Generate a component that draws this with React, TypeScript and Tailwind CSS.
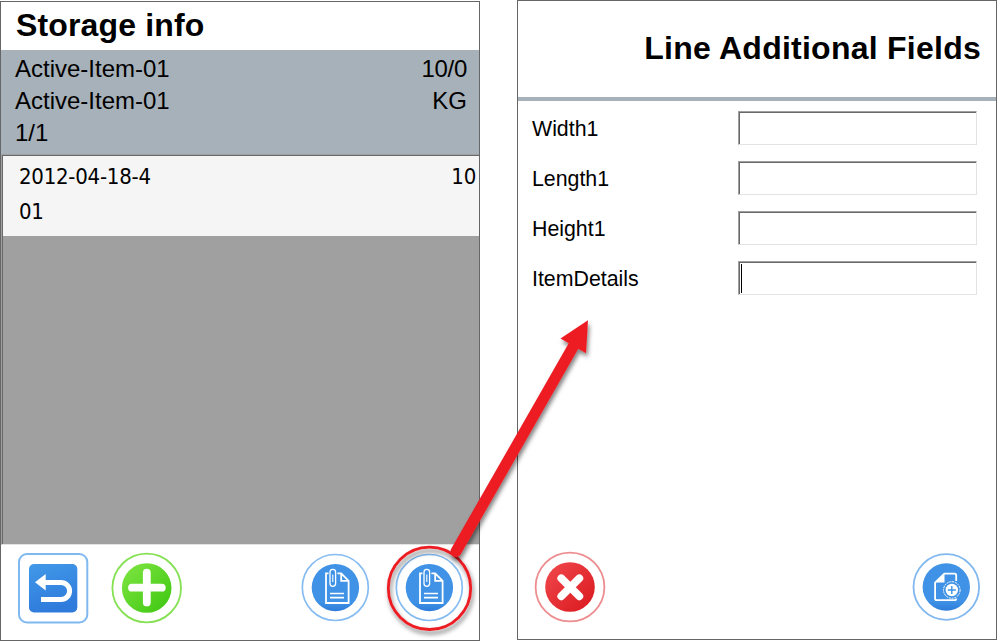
import React from "react";

const arial = "font-['Liberation_Sans',Arial,sans-serif]";

function BackIcon() {
  return (
    <svg width="72" height="72" viewBox="18 553 72 72" className="block">
      <defs>
        <linearGradient id="back" x1="0" y1="0" x2="0.3" y2="1">
          <stop offset="0" stopColor="#4199e8" />
          <stop offset="1" stopColor="#2f7bdc" />
        </linearGradient>
      </defs>
      <rect x="19" y="554" width="68.3" height="68.5" rx="8" fill="#fff" stroke="#80b9f0" strokeWidth="2" />
      <rect x="29" y="564" width="48.3" height="48.5" rx="5" fill="url(#back)" />
      <path d="M43.5 582.4H61a8.6 8.6 0 0 1 0 17.2H41" fill="none" stroke="#fff" strokeWidth="5" />
      <path d="M35 582.2L45.7 574v16.4z" fill="#fff" />
    </svg>
  );
}

function AddIcon() {
  return (
    <svg width="72" height="72" viewBox="111 552 72 72" className="block">
      <defs>
        <linearGradient id="add" x1="0" y1="0" x2="1" y2="1">
          <stop offset="0.1" stopColor="#7ae33e" />
          <stop offset="0.9" stopColor="#43c915" />
        </linearGradient>
      </defs>
      <circle cx="146.7" cy="588" r="34.3" fill="#fff" stroke="#86e053" strokeWidth="1.8" />
      <circle cx="146.7" cy="588" r="24.8" fill="url(#add)" />
      <path d="M146.8 572.6v29.8M132 587.7h29.8" stroke="#fff" strokeWidth="7.8" strokeLinecap="round" />
    </svg>
  );
}

function AttachmentIcon() {
  return (
    <svg width="70" height="70" viewBox="300 553 70 70" className="block">
      <defs>
        <linearGradient id="attach" x1="0" y1="0" x2="0" y2="1">
          <stop offset="0.8" stopColor="#3f92e5" />
          <stop offset="1" stopColor="#2f7cdb" />
        </linearGradient>
      </defs>
      <circle cx="335.3" cy="587.5" r="33" fill="#fff" stroke="#86bcf1" strokeWidth="1.7" />
      <circle cx="335.4" cy="587.6" r="23.7" fill="url(#attach)" />
      <g fill="none" stroke="#fff">
        <path d="M328.5 573.4H326v29.6h22.6v-22.2l-7.4-7.4h-3.8" strokeWidth="1.8" />
        <path d="M341.2 573.6v7.2h7.2" strokeWidth="1.8" />
        <path d="M330 593.5h14M330 597.7h14" strokeWidth="1.7" />
        <path d="M330 572.4v11.2a2.8 2.8 0 0 0 5.6 0v-11.4a2.8 2.8 0 0 0-5.6 0z" strokeWidth="1.3" />
        <path d="M332.8 574.5v7.5" strokeWidth="1.1" />
      </g>
    </svg>
  );
}

function CancelIcon() {
  return (
    <svg width="72" height="72" viewBox="534 551 72 72" className="block">
      <defs>
        <linearGradient id="cancel" x1="0" y1="0" x2="1" y2="1">
          <stop offset="0.1" stopColor="#ee4449" />
          <stop offset="0.9" stopColor="#dc1c22" />
        </linearGradient>
      </defs>
      <circle cx="570" cy="587" r="34.4" fill="#fff" stroke="#ed8d90" strokeWidth="1.8" />
      <circle cx="570" cy="587" r="24.8" fill="url(#cancel)" />
      <path d="M561.3 578.3l18 18M579.3 578.3l-18 18" stroke="#fff" strokeWidth="7.8" strokeLinecap="round" />
    </svg>
  );
}

function AddDocumentIcon() {
  return (
    <svg width="70" height="70" viewBox="911 552 70 70" className="block">
      <circle cx="946.3" cy="587" r="32.8" fill="#fff" stroke="#80b8ef" strokeWidth="1.8" />
      <circle cx="946.3" cy="587" r="23.7" fill="url(#attach)" />
      <path d="M956.2 581v-5.6q0-1.7-1.7-1.7h-10.2l-9.2 9v15.8q0 1.7 1.7 1.7h17.7q1.7 0 1.7-1.7" fill="none" stroke="#fff" strokeWidth="1.8" />
      <path d="M944.5 573.8v8.8h-9.3z" fill="#fff" />
      <circle cx="951.8" cy="590" r="8.3" fill="#3f92e5" stroke="#fff" strokeWidth="1" strokeDasharray="2 .8" />
      <circle cx="951.8" cy="590" r="6.2" fill="#fff" />
      <path d="M951.8 586v8M947.8 590h8" stroke="#3f92e5" strokeWidth="1.4" />
    </svg>
  );
}

function Callout() {
  return (
    <svg width="240" height="330" viewBox="380 311 240 330" className="pointer-events-none absolute left-[380px] top-[311px]">
      <defs>
        <filter id="shadow" x="-20%" y="-20%" width="150%" height="150%">
          <feDropShadow dx="1.5" dy="3.5" stdDeviation="2" floodColor="#000" floodOpacity="0.5" />
        </filter>
      </defs>
      <circle cx="429.5" cy="588.3" r="41.2" fill="none" stroke="#ed1c24" strokeWidth="2.8" filter="url(#shadow)" />
      <g filter="url(#shadow)" fill="#ed1c24">
        <path d="M456 551.5L573.5 346" stroke="#ed1c24" strokeWidth="11" strokeLinecap="round" />
        <path d="M588 320.3L586 353.3L560.5 338.5z" />
      </g>
    </svg>
  );
}

const fields = ["Width1", "Length1", "Height1", "ItemDetails"];

export default function App() {
  return (
    <main className={`relative flex h-[641px] w-[997px] justify-between overflow-hidden bg-white text-black ${arial}`}>
      <section className="mt-px flex h-[640px] w-[480px] flex-col border border-[#666]">
        <h1 className="h-12 pl-[15px] text-[32px] font-bold leading-[46px] tracking-[0.15px]">Storage info</h1>
        <div className="h-[104px] bg-[#a7b1b9] pl-[14px] pr-3 pt-[3px] text-2xl leading-8">
          <div className="flex justify-between"><span>Active-Item-01</span><span className="tracking-[-0.3px]">10/0</span></div>
          <div className="flex justify-between"><span>Active-Item-01</span><span>KG</span></div>
          <div>1/1</div>
        </div>
        <div className="flex h-[391px] flex-col border-b border-l border-t border-b-[#e3e3e3] border-l-[#a0a0a0] border-t-[#a0a0a0]">
          <div className="flex-1 border-l border-t border-[#696969] bg-[#a0a0a0]">
            <div className="flex h-20 justify-between bg-[#f5f5f5] pl-4 pr-[3px] pt-[3px] font-['DejaVu_Sans_Condensed','DejaVu_Sans',sans-serif] text-[22px] leading-[35px] tracking-[-0.25px] [font-stretch:condensed]">
              <div><div>2012-04-18-4</div><div>01</div></div>
              <div>10</div>
            </div>
          </div>
        </div>
        <div className="flex flex-1 items-start pl-[17px] pt-[7px]">
          <div className="mt-px"><BackIcon /></div>
          <div className="ml-[21px]"><AddIcon /></div>
          <div className="ml-[117px] mt-px"><AttachmentIcon /></div>
          <div className="ml-6 mt-px"><AttachmentIcon /></div>
        </div>
      </section>

      <section className="flex h-[640px] w-[480px] flex-col border border-[#666]">
        <h1 className="h-[100px] border-b-4 border-[#a7b1b9] pr-[15px] text-right text-[32px] font-bold leading-[94px] tracking-[0.25px]">Line Additional Fields</h1>
        <div className="flex flex-col gap-4 pl-[14px] pr-[19px] pt-[10px]">
          {fields.map((name) => (
            <label key={name} className="flex h-[34px] items-center justify-between text-[21.33px]">
              <span className="pt-[3px]">{name}</span>
              <span className="flex h-[34px] w-[239px] border border-b-[#e3e3e3] border-l-[#a0a0a0] border-r-[#e3e3e3] border-t-[#a0a0a0]">
                <span className="flex flex-1 border-l border-t border-[#696969] pl-px pt-px">
                  {name === "ItemDetails" && <span className="h-[29px] w-px bg-black" />}
                </span>
              </span>
            </label>
          ))}
        </div>
        <div className="mt-auto flex items-start justify-between pb-4 pl-4 pr-[15px]">
          <CancelIcon />
          <div className="mt-px"><AddDocumentIcon /></div>
        </div>
      </section>
      <Callout />
    </main>
  );
}
